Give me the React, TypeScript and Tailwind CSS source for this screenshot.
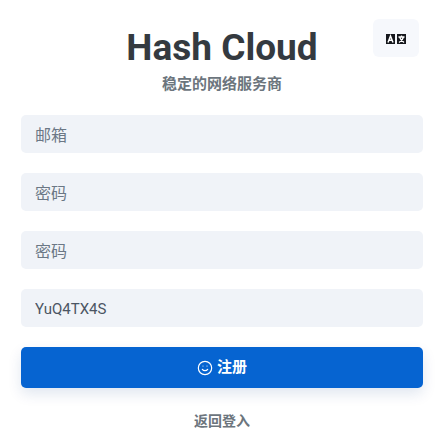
import { Smile } from 'lucide-react';

const font = { fontFamily: 'Roboto, "Noto Sans CJK SC", sans-serif' };

function Field({ placeholder, value }: { placeholder?: string; value?: string }) {
  return (
    <input
      readOnly
      placeholder={placeholder}
      value={value ?? ''}
      className={`h-[38px] w-full rounded-[5px] bg-[#f0f3f8] px-[14px] pt-[2px] text-[#4b5563] outline-none placeholder:text-[#6b7785] ${value ? 'text-[15px]' : 'text-[16px]'}`}
    />
  );
}

export default function App() {
  return (
    <div className="relative h-[445px] w-[445px] overflow-hidden bg-white pl-[21px] pr-[22px] pt-[26px]" style={font}>
      {/* language switch */}
      <button className="absolute left-[373px] top-[19px] flex h-[38px] w-[46px] items-center justify-center rounded-[6px] bg-[#f6f8fc]">
        <svg className="mt-[1px]" width="20" height="10" viewBox="0 0 20 10">
          <rect x="0" y="0" width="9" height="10" fill="#16181d" />
          <rect x="11" y="0" width="9" height="10" fill="#16181d" />
          <path d="M2 8.500 4.500 2l2.500 6.500M3 6.300h3" stroke="#fff" strokeWidth="1.500" fill="none" />
          <path d="M12.500 3h6M15.500 1.500V3M13.500 3c.8 2.500 2.500 4 4.500 5.500M17.500 3c-.6 2.500-2 4-4.500 5.500" stroke="#fff" strokeWidth="1.300" fill="none" />
        </svg>
      </button>

      <h1 className="text-center text-[37px] font-bold leading-[44px] text-[#343a40]">Hash Cloud</h1>
      <p className="mt-[4px] text-center text-[15px] font-bold leading-[20px] text-[#6c757d]">稳定的网络服务商</p>

      <form className="mt-[21px] flex flex-col gap-[20px]">
        <Field placeholder="邮箱" />
        <Field placeholder="密码" />
        <Field placeholder="密码" />
        <Field value="YuQ4TX4S" />
        <button
          type="button"
          className="flex h-[41px] w-full items-center justify-center gap-[4px] rounded-[5px] bg-[#0664d1] text-[15px] font-bold text-white shadow-[0_6px_14px_rgba(6,60,130,0.12)]"
        >
          <Smile size={16} strokeWidth={1.75} />
          注册
        </button>
      </form>

      <p className="mt-[23px] text-center text-[14px] font-bold leading-[20px] text-[#6c757d]">返回登入</p>
    </div>
  );
}
